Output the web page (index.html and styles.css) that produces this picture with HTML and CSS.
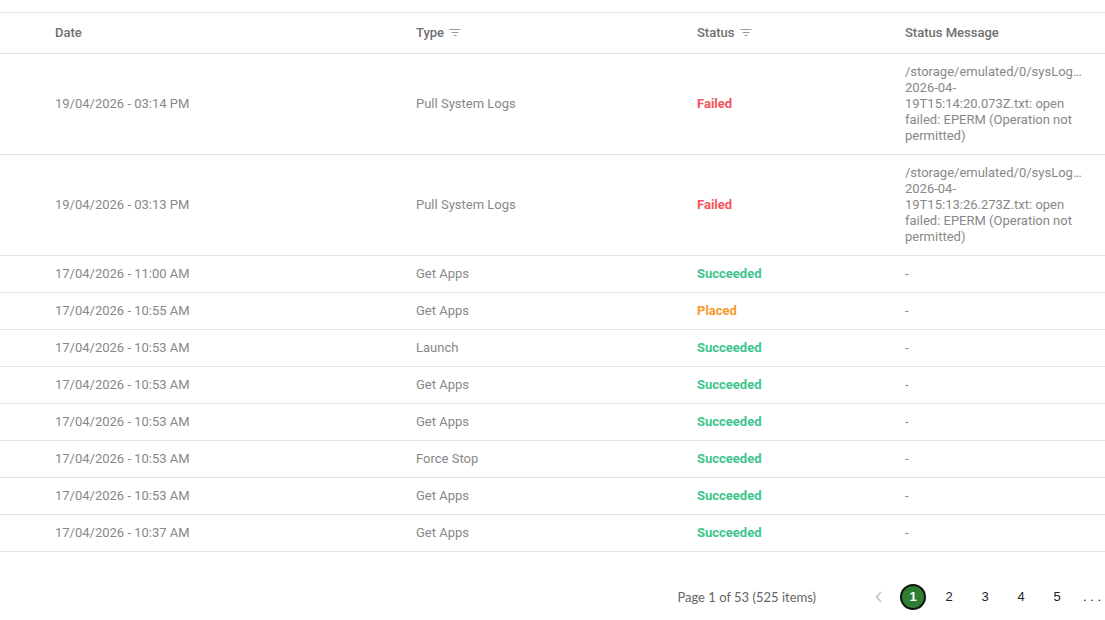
FILE: index.html
```html
<!DOCTYPE html>
<html lang="en">
<head>
<meta charset="utf-8">
<title>Command History</title>
<link rel="stylesheet" href="styles.css">
</head>
<body>
<div class="page">
  <table class="grid">
    <colgroup>
      <col class="c-date"><col class="c-type"><col class="c-status"><col class="c-msg">
    </colgroup>
    <thead>
      <tr>
        <th class="first">Date</th>
        <th>Type <svg class="filter" width="12" height="10" viewBox="0 0 12 10"><path d="M0.5 1.5h11M2.5 4.5h7M4.5 7.5h3" stroke="#9a9a9a" stroke-width="1" fill="none"/></svg></th>
        <th>Status <svg class="filter" width="12" height="10" viewBox="0 0 12 10"><path d="M0.5 1.5h11M2.5 4.5h7M4.5 7.5h3" stroke="#9a9a9a" stroke-width="1" fill="none"/></svg></th>
        <th>Status Message</th>
      </tr>
    </thead>
    <tbody>
      <tr>
        <td class="first">19/04/2026 - 03:14 PM</td>
        <td>Pull System Logs</td>
        <td class="st failed">Failed</td>
        <td class="msg"><span class="path">/storage/emulated/0/sysLogs/log-</span><span class="rest">2026-04-19T15:14:20.073Z.txt: open failed: EPERM (Operation not permitted)</span></td>
      </tr>
      <tr>
        <td class="first">19/04/2026 - 03:13 PM</td>
        <td>Pull System Logs</td>
        <td class="st failed">Failed</td>
        <td class="msg"><span class="path">/storage/emulated/0/sysLogs/log-</span><span class="rest">2026-04-19T15:13:26.273Z.txt: open failed: EPERM (Operation not permitted)</span></td>
      </tr>
      <tr><td class="first">17/04/2026 - 11:00 AM</td><td>Get Apps</td><td class="st ok">Succeeded</td><td class="msg">-</td></tr>
      <tr><td class="first">17/04/2026 - 10:55 AM</td><td>Get Apps</td><td class="st placed">Placed</td><td class="msg">-</td></tr>
      <tr><td class="first">17/04/2026 - 10:53 AM</td><td>Launch</td><td class="st ok">Succeeded</td><td class="msg">-</td></tr>
      <tr><td class="first">17/04/2026 - 10:53 AM</td><td>Get Apps</td><td class="st ok">Succeeded</td><td class="msg">-</td></tr>
      <tr><td class="first">17/04/2026 - 10:53 AM</td><td>Get Apps</td><td class="st ok">Succeeded</td><td class="msg">-</td></tr>
      <tr><td class="first">17/04/2026 - 10:53 AM</td><td>Force Stop</td><td class="st ok">Succeeded</td><td class="msg">-</td></tr>
      <tr><td class="first">17/04/2026 - 10:53 AM</td><td>Get Apps</td><td class="st ok">Succeeded</td><td class="msg">-</td></tr>
      <tr><td class="first">17/04/2026 - 10:37 AM</td><td>Get Apps</td><td class="st ok">Succeeded</td><td class="msg">-</td></tr>
    </tbody>
  </table>

  <div class="pager">
    <span class="summary">Page 1 of 53 (525 items)</span>
    <div class="pages">
      <span class="pg prev"><svg width="8" height="12" viewBox="0 0 8 12"><path d="M6 1L1.5 6L6 11" stroke="#c4c4c4" stroke-width="1.6" fill="none"/></svg></span>
      <span class="pg"><span class="current">1</span></span>
      <span class="pg">2</span>
      <span class="pg">3</span>
      <span class="pg">4</span>
      <span class="pg">5</span>
      <span class="pg dots">. . .</span>
    </div>
  </div>
</div>
</body>
</html>
```

FILE: styles.css
```css
html, body {
  margin: 0;
  padding: 0;
  background: #ffffff;
}

.page {
  padding-top: 12px;
  font-family: Roboto, "Liberation Sans", sans-serif;
  font-size: 13px;
  line-height: 16px;
  color: #888888;
}

.grid {
  width: 1105px;
  border-collapse: collapse;
  table-layout: fixed;
}

.c-date { width: 406px; }
.c-type { width: 281px; }
.c-status { width: 208px; }
.c-msg { width: 210px; }

.grid th,
.grid td {
  text-align: left;
  vertical-align: middle;
  padding: 10px 10px;
  border-top: 1px solid #e2e2e2;
  border-bottom: 1px solid #e2e2e2;
}

.grid th {
  font-weight: 500;
  color: #707070;
  padding-top: 12px;
  padding-bottom: 12px;
}

.grid .first {
  padding-left: 55px;
}

.filter {
  margin-left: 2px;
  vertical-align: -1px;
}

.st {
  font-weight: 700;
}
.st.failed { color: #f2545e; }
.st.ok { color: #3dc68d; }
.st.placed { color: #f7992a; }

.grid .msg {
  padding-right: 22px;
}

.msg .path {
  display: block;
  white-space: nowrap;
  overflow: hidden;
  text-overflow: ellipsis;
}

.msg .rest {
  display: block;
  width: 169px;
}

.pager {
  display: flex;
  justify-content: flex-end;
  align-items: center;
  padding-top: 32px;
}

.summary {
  font-family: Lato, "Liberation Sans", sans-serif;
  font-size: 13px;
  color: #666666;
  margin-right: 43px;
}

.pages {
  display: flex;
  align-items: center;
}

.pg {
  width: 36px;
  height: 26px;
  display: flex;
  align-items: center;
  justify-content: center;
  font-family: "Liberation Sans", Arial, sans-serif;
  font-size: 13px;
  color: #222222;
}

.pg.prev {
  padding-left: 3px;
  box-sizing: border-box;
}

.pg.dots {
  width: 30px;
  justify-content: flex-start;
  padding-left: 8px;
  box-sizing: border-box;
}

.current {
  width: 22px;
  height: 22px;
  border-radius: 50%;
  background: #2e7d32;
  border: 2px solid #111111;
  color: #ffffff;
  font-weight: 700;
  display: flex;
  align-items: center;
  justify-content: center;
}
```
